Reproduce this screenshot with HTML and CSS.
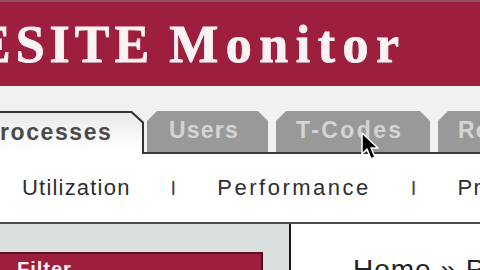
FILE: index.html
```html
<!DOCTYPE html>
<html>
<head>
<meta charset="utf-8">
<link rel="stylesheet" href="styles.css">
</head>
<body>
<div class="page">
  <header class="header">
    <h1 class="title"><span class="t-caps">ESITE</span> <span class="t-word">Monitor</span></h1>
  </header>
  <div class="tabband">
    <div class="tab-active"><div class="tab-active-inner">Processes</div></div>
    <div class="tab-rest">
      <div class="tab tab-users">Users</div>
      <div class="tab tab-tcodes">T-Codes</div>
      <div class="tab tab-r">Reports</div>
    </div>
  </div>
  <nav class="nav">
    <span>Utilization</span><span class="sep">I</span><span class="wide">Performance</span><span class="sep">I</span><span>Processes</span>
  </nav>
  <div class="content">
    <aside class="side">
      <div class="filter">Filter</div>
    </aside>
    <main class="main">
      <div class="crumb">Home » Processes</div>
    </main>
  </div>
  <svg class="cursor" width="22" height="30" viewBox="0 0 22 30">
    <path d="M1 1 L1 22 L6 17 L10 27 L14 25 L10 16 L17 16 Z" fill="#000" stroke="#fff" stroke-width="1.5" stroke-linejoin="round"/>
  </svg>
</div>
</body>
</html>
```
FILE: styles.css
```css
html, body {
  margin: 0;
  padding: 0;
  background: #fff;
  overflow: hidden;
}
.page {
  position: relative;
  width: 480px;
  height: 270px;
  overflow: hidden;
  font-family: "Liberation Sans", Arial, sans-serif;
}
.header {
  height: 67px;
  padding-top: 17px;
  background: #9d1f3d;
  border-top: 2px solid #8c5563;
  overflow: hidden;
  white-space: nowrap;
}
.title {
  margin: 0 0 0 -24px;
  font-family: "Liberation Serif", "Times New Roman", serif;
  font-weight: bold;
  font-size: 52px;
  line-height: 52px;
  color: #fbf2f4;
  -webkit-text-stroke: 0.8px #fbf2f4;
}
.t-caps {
  letter-spacing: 5px;
}
.t-word {
  letter-spacing: 7.5px;
  margin-left: 2px;
}
.tabband {
  display: flex;
  align-items: flex-end;
  height: 68px;
  background: #f1f1f1;
  white-space: nowrap;
}
.tab-active {
  width: 180px;
  height: 43px;
  margin-left: -36px;
  background: #333;
  clip-path: polygon(0 0, calc(100% - 12px) 0, 100% 11px, 100% 100%, 0 100%);
  display: flex;
  flex-shrink: 0;
}
.tab-active-inner {
  flex: 1;
  margin: 2px 2px 0 0;
  background: linear-gradient(#e9e9e9, #fbfbfb 70%, #fff);
  clip-path: polygon(0 0, calc(100% - 11px) 0, 100% 10px, 100% 100%, 0 100%);
  font-weight: bold;
  font-size: 23px;
  letter-spacing: 1.6px;
  color: #4a4a4a;
  padding-left: 19px;
  line-height: 38px;
}
.tab-rest {
  display: flex;
  gap: 8px;
  flex: 1;
  padding-left: 3px;
  border-bottom: 2px solid #3a3a3a;
  overflow: hidden;
}
.tab {
  height: 41px;
  background: #999;
  clip-path: polygon(10px 0, calc(100% - 10px) 0, 100% 10px, 100% 100%, 0 100%, 0 10px);
  color: #d4d4d4;
  font-weight: bold;
  font-size: 23px;
  letter-spacing: 1.2px;
  line-height: 38px;
  flex-shrink: 0;
  box-sizing: border-box;
}
.tab-users { width: 121px; padding-left: 22px; }
.tab-tcodes { width: 154px; padding-left: 20px; letter-spacing: 2.4px; }
.tab-r { width: 120px; padding-left: 20px; }
.nav {
  height: 68px;
  display: flex;
  align-items: center;
  gap: 40px;
  padding-left: 22px;
  font-size: 22px;
  letter-spacing: 1.2px;
  color: #2e2e2e;
  white-space: nowrap;
}
.nav .wide {
  letter-spacing: 2.5px;
}
.nav .sep {
  font-size: 20px;
  color: #444;
}
.content {
  display: flex;
  border-top: 2px solid #4a4a4a;
  height: 60px;
}
.side {
  width: 291px;
  flex-shrink: 0;
  background: #d9dfdd;
  border-right: 2px solid #1a1a1a;
  padding-top: 28px;
  box-sizing: border-box;
}
.filter {
  width: 263px;
  height: 40px;
  box-sizing: border-box;
  background: #9d1f3d;
  border-top: 2px solid #5e1325;
  border-right: 2px solid #4a1020;
  color: #fbf0f2;
  font-weight: bold;
  font-size: 20px;
  letter-spacing: 1px;
  padding: 4px 0 0 17px;
}
.main {
  flex: 1;
  padding: 30px 0 0 62px;
  white-space: nowrap;
  overflow: hidden;
}
.crumb {
  font-size: 28px;
  color: #222;
  letter-spacing: 1px;
}
.cursor {
  position: absolute;
  left: 361px;
  top: 132px;
}
```
